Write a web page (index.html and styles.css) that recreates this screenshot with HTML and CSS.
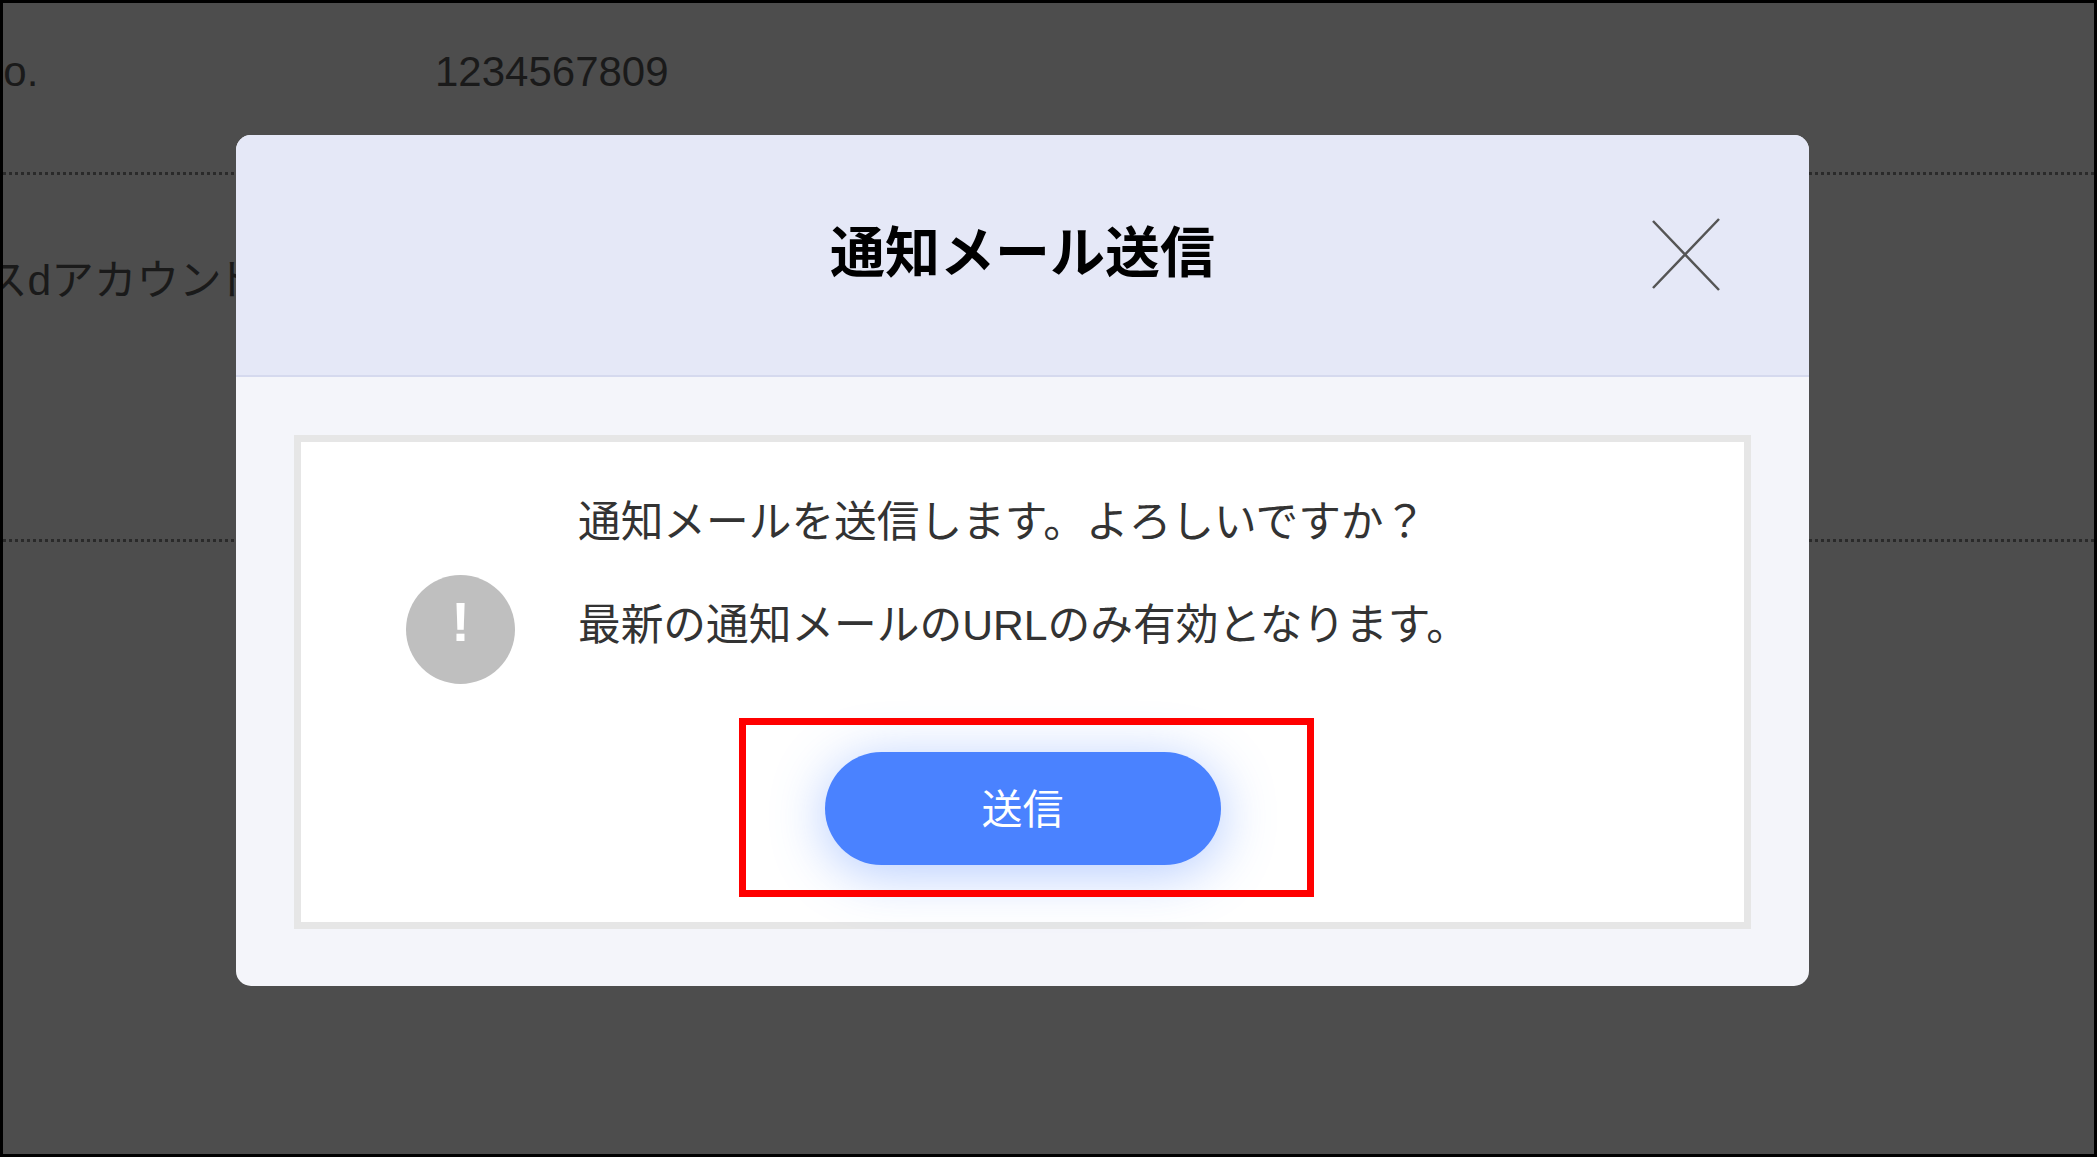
FILE: index.html
```html
<!DOCTYPE html>
<html lang="ja">
<head>
  <meta charset="UTF-8">
  <meta name="viewport" content="width=device-width, initial-scale=1.0">
  <title>通知メール送信</title>
  <link rel="stylesheet" href="styles.css">
</head>
<body>
  <div class="frame">
    <div class="row row-first">
      <div class="label label-no">No.</div>
      <div class="value">1234567809</div>
    </div>
    <div class="row row-second">
      <div class="label label-account">スdアカウン<span class="tight">ト</span></div>
    </div>

    <div class="modal">
      <div class="modal-header">
        <h1>通知メール送信</h1>
        <svg class="close" viewBox="0 0 68 74" aria-label="閉じる">
          <path d="M1 3L67 72M1 70L67 1"/>
        </svg>
      </div>
      <div class="modal-body">
        <div class="panel">
          <div class="message">
            <div class="alert-icon">!</div>
            <div class="message-text">
              <p>通知メールを送信します。よろしいですか？</p>
              <p>最新の通知メールのURLのみ有効となります。</p>
            </div>
          </div>
          <div class="actions">
            <button class="send">送信</button>
            <div class="highlight"></div>
          </div>
        </div>
      </div>
    </div>
  </div>
</body>
</html>
```

FILE: styles.css
```css
:root {
  --overlay: #4d4d4d;
  --header: #e5e8f7;
  --modal: #f4f5fa;
  --blue: #4a82ff;
  --text: #333;
}

* {
  box-sizing: border-box;
}

body {
  margin: 0;
  font-family: "Liberation Sans", "Noto Sans CJK JP", sans-serif;
}

.frame {
  position: relative;
  width: 2097px;
  height: 1157px;
  overflow: hidden;
  background: var(--overlay);
  border: 3px solid #000;
  color: #1a1a1a;
  font-size: 42px;
  line-height: 60px;
}

.row {
  display: flex;
  border-bottom: 3px dotted #2a2a2a;
}

.row-first {
  height: 172px;
  padding-top: 39px;
}

.row-second {
  height: 367px;
  padding-top: 75px;
}

.label-no {
  width: 431px;
  margin-left: -30px;
  flex-shrink: 0;
}

.label-account {
  margin-left: -18px;
  font-size: 42.6px;
  white-space: nowrap;
}

.tight {
  margin-left: -6px;
}

.value {
  margin-left: 31px;
}

.modal {
  position: absolute;
  left: 233px;
  top: 132px;
  width: 1573px;
  height: 851px;
  background: var(--modal);
  border-radius: 15px;
  overflow: hidden;
}

.modal-header {
  position: relative;
  display: flex;
  align-items: center;
  justify-content: center;
  height: 242px;
  padding-bottom: 4px;
  background: var(--header);
  border-bottom: 2px solid #d5d9ee;
}

.modal-header h1 {
  margin: 0;
  color: #000;
  font-size: 55px;
  font-weight: bold;
}

.close {
  position: absolute;
  top: 83px;
  right: 89px;
  width: 68px;
  height: 74px;
}

.close path {
  fill: none;
  stroke: #555;
  stroke-width: 2.5;
}

.modal-body {
  padding: 58px 58px 56px 58px;
}

.panel {
  height: 494px;
  padding: 50px 0 0 105px;
  background: #fff;
  border: 7px solid #e6e6e6;
}

.message {
  display: flex;
  align-items: flex-start;
  gap: 63px;
  color: var(--text);
}

.alert-icon {
  display: flex;
  align-items: center;
  justify-content: center;
  width: 109px;
  height: 109px;
  margin-top: 83px;
  padding-bottom: 16px;
  flex-shrink: 0;
  background: #bfbfbf;
  border-radius: 50%;
  color: #fff;
  font-size: 56px;
  font-weight: bold;
}

.message-text {
  font-size: 42.7px;
}

.message-text p {
  margin: 0 0 43px;
}

.actions {
  position: relative;
  display: flex;
  justify-content: center;
  margin: 54px 0 0 -105px;
}

.send {
  width: 396px;
  height: 113px;
  padding-bottom: 7px;
  background: var(--blue);
  border: none;
  border-radius: 57px;
  box-shadow: 0 8px 54px rgba(74, 130, 255, 0.42);
  color: #fff;
  font-family: inherit;
  font-size: 41px;
}

.highlight {
  position: absolute;
  top: -34px;
  left: 438px;
  width: 575px;
  height: 179px;
  border: 7px solid #f00;
}
```
